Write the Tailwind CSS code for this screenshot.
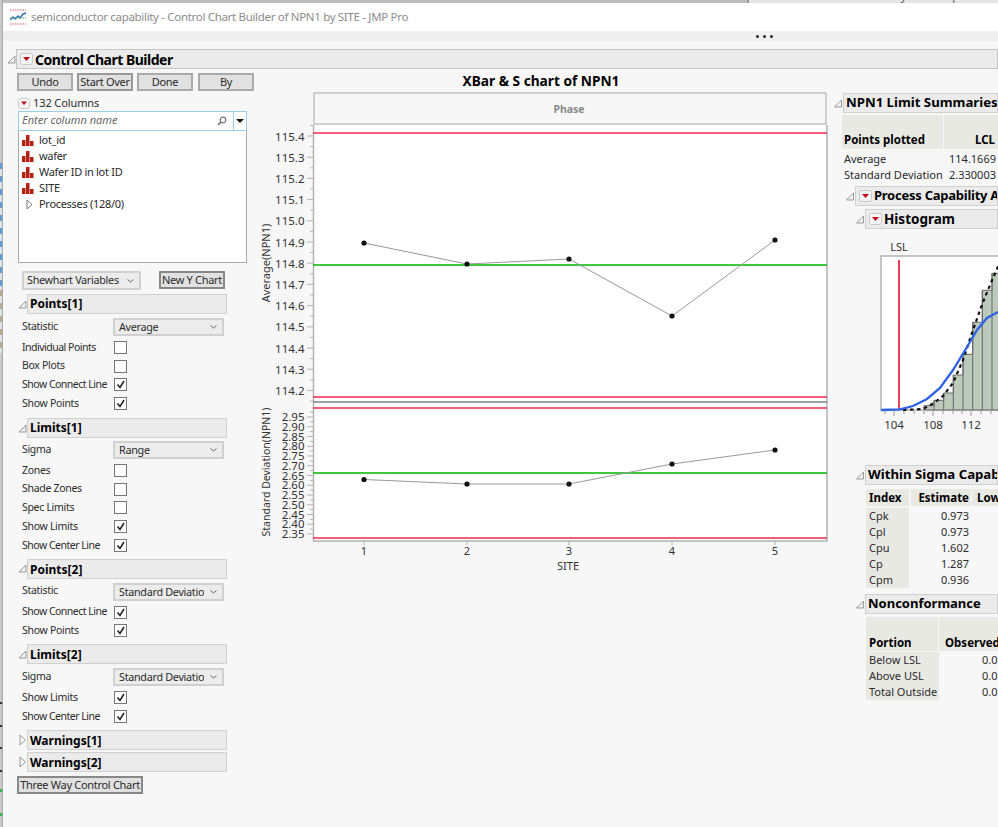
<!DOCTYPE html>
<html><head><meta charset="utf-8"><title>Control Chart Builder</title>
<script src="https://cdn.jsdelivr.net/npm/@tailwindcss/browser@4"></script></head>
<body class="bg-[#f7f7f7]">
<div class="w-[998px] h-[827px] overflow-hidden flex bg-[#f7f7f7] text-[#2b2b2b] text-[10.5px] tracking-[-0.3px] font-['Noto_Sans',sans-serif]">
  <!-- sliver of the window behind -->
  <div class="w-[3px] shrink-0 flex flex-col bg-[#c9c9c9] border-r border-[#aaa]">
    <div class="h-[163px]"></div>
    <div class="h-[127px] bg-[repeating-linear-gradient(#5b9bd8_0_6px,#dbe4ec_6px_13px)]"></div>
    <div class="h-[63px] bg-[repeating-linear-gradient(#b8a98c_0_6px,#dbe4ec_6px_13px)]"></div>
    <div class="h-[349px]"></div>
    <div class="h-[2px] bg-[#333]"></div><div class="h-[21px]"></div>
    <div class="h-[2px] bg-[#333]"></div><div class="h-[20px]"></div>
    <div class="h-[2px] bg-[#333]"></div><div class="h-[21px]"></div>
    <div class="h-[2px] bg-[#333]"></div><div class="h-[17px]"></div>
    <div class="h-[3px] bg-[#2fb84a]"></div><div class="h-[21px]"></div>
    <div class="h-[3px] bg-[#2fb84a]"></div>
  </div>
  <div class="flex-1 min-w-0 flex flex-col">
  <div class="h-[3px] shrink-0 flex bg-[#bdbdbd] overflow-hidden">
    <div class="w-[744px] shrink-0"></div>
    <div class="flex-1 bg-[#e4e4e4] border-l-2 border-[#999] relative h-[3px] overflow-hidden text-[11px] text-[#555] tracking-normal">
      <div class="flex -mt-[12px] pl-[8px] gap-[16px] whitespace-nowrap"><span>File</span><span>Tables</span><span>DOE</span><span>Analyze</span><span>Graph</span><span>Tools</span></div>
    </div>
  </div>
  <div class="h-[28px] shrink-0 flex items-center bg-white pl-[7px]">
    <svg width="17" height="16" viewBox="0 0 17 16" class="mr-[4px] shrink-0"><path d="M0 1h16" stroke="#e05a6a" stroke-dasharray="1.500 1"/><path d="M0 15h16" stroke="#e05a6a" stroke-dasharray="1.500 1"/><path d="M0 11l3-3 2 2 3-3 2 2 3-4 3-1" fill="none" stroke="#2a6fc0" stroke-width="1.500"/><path d="M0 9h16" stroke="#6aaa5a" stroke-dasharray="2 1"/></svg>
    <span class="text-[11.5px] tracking-[-0.32px] text-[#8c8c8c] whitespace-nowrap">semiconductor capability - Control Chart Builder of NPN1 by SITE - JMP Pro</span>
  </div>
  <div class="h-[10px] shrink-0 flex items-center justify-end pr-[225px] gap-[4px] bg-[#efefef]">
    <i class="w-[3px] h-[3px] rounded-full bg-[#222]"></i><i class="w-[3px] h-[3px] rounded-full bg-[#222]"></i><i class="w-[3px] h-[3px] rounded-full bg-[#222]"></i>
  </div>
  <div class="flex-1 pt-[8px] bg-[#f7f7f7] min-h-0">
    <!-- top outline -->
    <div class="flex items-center h-[20px] ml-[4px]">
      <svg width="9" height="9" viewBox="0 0 9 9" class="shrink-0"><path d="M8 1v7H1z" fill="#f2f2f2" stroke="#999"/></svg>
      <div class="flex-1 h-[20px] flex items-center bg-[#ebebeb] border border-[#c4c4c4] pl-[3px] text-[14px] tracking-[-0.5px] font-bold text-black">
        <svg width="13" height="12" viewBox="0 0 13 12" class="mr-[2px] shrink-0"><rect x=".5" y=".5" width="12" height="11" rx="2" fill="#f5f5f5" stroke="#c8c8c8"/><path d="M3 4h7l-3.500 4z" fill="#c8001e"/></svg>
        <span>Control Chart Builder</span>
      </div>
    </div>
    <div class="flex mt-[1px]">
      <!-- left column -->
      <div class="w-[238px] ml-[14px] shrink-0">
        <div class="flex gap-[4px] mt-[3px]">
          <button class="w-[56px] h-[18px] bg-[#e1e1e1] border-2 border-[#aaa] text-[11px] leading-[14px]">Undo</button>
          <button class="w-[56px] h-[18px] bg-[#e1e1e1] border-2 border-[#999] text-[11px] leading-[14px] whitespace-nowrap">Start Over</button>
          <button class="w-[56px] h-[18px] bg-[#e1e1e1] border-2 border-[#aaa] text-[11px] leading-[14px]">Done</button>
          <button class="w-[56px] h-[18px] bg-[#e1e1e1] border-2 border-[#aaa] ml-[1px] text-[11px] leading-[14px]">By</button>
        </div>
        <div class="flex items-center h-[14px] mt-[6px] ml-[1px] gap-[3px]">
          <svg width="12" height="11" viewBox="0 0 12 11" class="shrink-0 -mt-[2px]"><rect x=".5" y=".5" width="11" height="10" rx="2" fill="#f5f5f5" stroke="#c8c8c8"/><path d="M3 3.500h6l-3 3.500z" fill="#c8001e"/></svg>
          <span class="text-[11px] tracking-[-0.1px] -mt-[1px]">132 Columns</span>
        </div>
        <div class="ml-[1px] w-[229px] h-[20px] flex bg-white border border-[#99cfe8]">
          <div class="flex-1 flex items-center pl-[3px] -mt-[1px] italic text-[#666] text-[11px] tracking-normal">Enter column name</div>
          <svg width="10" height="10" viewBox="0 0 10 10" class="self-center mr-[6px] shrink-0"><circle cx="6" cy="4" r="2.800" fill="none" stroke="#777" stroke-width="1.200"/><path d="M4 6L1 9" stroke="#666" stroke-width="1.500"/></svg>
          <div class="w-[13px] flex items-center justify-center border-l border-[#99cfe8]"><svg width="8" height="4" viewBox="0 0 8 4"><path d="M0 0h8L4 4z" fill="#111"/></svg></div>
        </div>
        <div class="ml-[1px] w-[229px] h-[132px] bg-white border border-t-0 border-[#aaa] pl-[3px] pt-[1px] text-[11px]">
          <div class="h-[16px] flex items-center gap-[5px]"><svg width="12" height="11" viewBox="0 0 12 11" class="shrink-0"><path d="M0 5h3.500v6H0zM4 0h3.500v11H4zM8 6h3.500v5H8z" fill="#b5200f"/></svg>lot_id</div>
          <div class="h-[16px] flex items-center gap-[5px]"><svg width="12" height="11" viewBox="0 0 12 11" class="shrink-0"><path d="M0 5h3.500v6H0zM4 0h3.500v11H4zM8 6h3.500v5H8z" fill="#b5200f"/></svg>wafer</div>
          <div class="h-[16px] flex items-center gap-[5px]"><svg width="12" height="11" viewBox="0 0 12 11" class="shrink-0"><path d="M0 5h3.500v6H0zM4 0h3.500v11H4zM8 6h3.500v5H8z" fill="#b5200f"/></svg>Wafer ID in lot ID</div>
          <div class="h-[16px] flex items-center gap-[5px]"><svg width="12" height="11" viewBox="0 0 12 11" class="shrink-0"><path d="M0 5h3.500v6H0zM4 0h3.500v11H4zM8 6h3.500v5H8z" fill="#b5200f"/></svg>SITE</div>
          <div class="h-[16px] flex items-center gap-[6px] pl-[4px]"><svg width="7" height="11" viewBox="0 0 7 11" class="shrink-0"><path d="M1 1l5 4.500L1 10z" fill="none" stroke="#777"/></svg>Processes (128/0)</div>
        </div>
        <div class="flex items-start mt-[8px] ml-[5px] h-[19px]">
          <div class="w-[119px] h-[19px] bg-[#ececec] border-2 border-[#d0d0d0] flex items-center justify-between pl-[3px] pr-[5px] text-[10.8px] whitespace-nowrap"><span>Shewhart Variables</span><svg width="7" height="4" viewBox="0 0 7 4" class="shrink-0"><path d="M.5.500l3 2.500 3-2.500" fill="none" stroke="#666"/></svg></div>
          <button class="ml-[18px] w-[66px] h-[18px] bg-[#e1e1e1] border-2 border-[#888] text-[11px] leading-[14px] whitespace-nowrap">New Y Chart</button>
        </div>

        <div class="flex items-center h-[20px] mt-[4px] ml-[1px]"><svg width="9" height="9" viewBox="0 0 9 9" class="shrink-0"><path d="M8 1v7H1z" fill="#f2f2f2" stroke="#999"/></svg><div class="w-[200px] h-[20px] flex items-center pl-[2px] bg-[#ebebeb] border border-[#d0d0d0] text-[12px] tracking-normal font-bold text-black">Points[1]</div></div>
        <div class="flex items-center h-[22px] mt-[2px] ml-[5px]"><span class="w-[91px] -mt-[1px]">Statistic</span><div class="w-[111px] h-[18px] bg-[#ececec] border-2 border-[#d0d0d0] flex items-center justify-between pl-[4px] pr-[5px] text-[10.8px]"><span>Average</span><svg width="7" height="4" viewBox="0 0 7 4" class="shrink-0"><path d="M.5.500l3 2.500 3-2.500" fill="none" stroke="#666"/></svg></div></div>
        <div class="flex items-center h-[18.75px] ml-[5px]"><span class="w-[92px] whitespace-nowrap tracking-[-0.5px]">Individual Points</span><i class="w-[13px] h-[13px] bg-white border border-[#777]"></i></div>
        <div class="flex items-center h-[18.75px] ml-[5px]"><span class="w-[92px]">Box Plots</span><i class="w-[13px] h-[13px] bg-white border border-[#777]"></i></div>
        <div class="flex items-center h-[18.75px] ml-[5px]"><span class="w-[92px] whitespace-nowrap tracking-[-0.5px]">Show Connect Line</span><i class="w-[13px] h-[13px] bg-white border border-[#777] flex"><svg width="11" height="11" viewBox="0 0 11 11"><path d="M2.500 5.500l2.500 3 4-6.500" fill="none" stroke="#222" stroke-width="1.600"/></svg></i></div>
        <div class="flex items-center h-[18.75px] ml-[5px]"><span class="w-[92px]">Show Points</span><i class="w-[13px] h-[13px] bg-white border border-[#777] flex"><svg width="11" height="11" viewBox="0 0 11 11"><path d="M2.500 5.500l2.500 3 4-6.500" fill="none" stroke="#222" stroke-width="1.600"/></svg></i></div>

        <div class="flex items-center h-[20px] mt-[5px] ml-[1px]"><svg width="9" height="9" viewBox="0 0 9 9" class="shrink-0"><path d="M8 1v7H1z" fill="#f2f2f2" stroke="#999"/></svg><div class="w-[200px] h-[20px] flex items-center pl-[2px] bg-[#ebebeb] border border-[#d0d0d0] text-[12px] tracking-normal font-bold text-black">Limits[1]</div></div>
        <div class="flex items-center h-[22px] mt-[1px] ml-[5px]"><span class="w-[91px] -mt-[1px]">Sigma</span><div class="w-[111px] h-[18px] bg-[#ececec] border-2 border-[#d0d0d0] flex items-center justify-between pl-[4px] pr-[5px] text-[10.8px]"><span>Range</span><svg width="7" height="4" viewBox="0 0 7 4" class="shrink-0"><path d="M.5.500l3 2.500 3-2.500" fill="none" stroke="#666"/></svg></div></div>
        <div class="flex items-center h-[18.75px] ml-[5px]"><span class="w-[92px]">Zones</span><i class="w-[13px] h-[13px] bg-white border border-[#777]"></i></div>
        <div class="flex items-center h-[18.75px] ml-[5px]"><span class="w-[92px]">Shade Zones</span><i class="w-[13px] h-[13px] bg-white border border-[#777]"></i></div>
        <div class="flex items-center h-[18.75px] ml-[5px]"><span class="w-[92px]">Spec Limits</span><i class="w-[13px] h-[13px] bg-white border border-[#777]"></i></div>
        <div class="flex items-center h-[18.75px] ml-[5px]"><span class="w-[92px]">Show Limits</span><i class="w-[13px] h-[13px] bg-white border border-[#777] flex"><svg width="11" height="11" viewBox="0 0 11 11"><path d="M2.500 5.500l2.500 3 4-6.500" fill="none" stroke="#222" stroke-width="1.600"/></svg></i></div>
        <div class="flex items-center h-[18.75px] ml-[5px]"><span class="w-[92px] whitespace-nowrap tracking-[-0.5px]">Show Center Line</span><i class="w-[13px] h-[13px] bg-white border border-[#777] flex"><svg width="11" height="11" viewBox="0 0 11 11"><path d="M2.500 5.500l2.500 3 4-6.500" fill="none" stroke="#222" stroke-width="1.600"/></svg></i></div>

        <div class="flex items-center h-[20px] mt-[4px] ml-[1px]"><svg width="9" height="9" viewBox="0 0 9 9" class="shrink-0"><path d="M8 1v7H1z" fill="#f2f2f2" stroke="#999"/></svg><div class="w-[200px] h-[20px] flex items-center pl-[2px] pt-[2px] bg-[#ebebeb] border border-[#d0d0d0] text-[12px] tracking-normal font-bold text-black">Points[2]</div></div>
        <div class="flex items-center h-[22px] mt-[2px] ml-[5px]"><span class="w-[91px] -mt-[1px]">Statistic</span><div class="w-[111px] h-[18px] bg-[#ececec] border-2 border-[#d0d0d0] flex items-center justify-between pl-[4px] pr-[5px] text-[10.8px]"><span class="w-[85px] overflow-hidden whitespace-nowrap">Standard Deviation</span><svg width="7" height="4" viewBox="0 0 7 4" class="shrink-0"><path d="M.5.500l3 2.500 3-2.500" fill="none" stroke="#666"/></svg></div></div>
        <div class="flex items-center h-[18.75px] ml-[5px]"><span class="w-[92px] whitespace-nowrap tracking-[-0.5px]">Show Connect Line</span><i class="w-[13px] h-[13px] bg-white border border-[#777] flex"><svg width="11" height="11" viewBox="0 0 11 11"><path d="M2.500 5.500l2.500 3 4-6.500" fill="none" stroke="#222" stroke-width="1.600"/></svg></i></div>
        <div class="flex items-center h-[18.75px] ml-[5px]"><span class="w-[92px]">Show Points</span><i class="w-[13px] h-[13px] bg-white border border-[#777] flex"><svg width="11" height="11" viewBox="0 0 11 11"><path d="M2.500 5.500l2.500 3 4-6.500" fill="none" stroke="#222" stroke-width="1.600"/></svg></i></div>

        <div class="flex items-center h-[20px] mt-[4px] ml-[1px]"><svg width="9" height="9" viewBox="0 0 9 9" class="shrink-0"><path d="M8 1v7H1z" fill="#f2f2f2" stroke="#999"/></svg><div class="w-[200px] h-[20px] flex items-center pl-[2px] pt-[2px] bg-[#ebebeb] border border-[#d0d0d0] text-[12px] tracking-normal font-bold text-black">Limits[2]</div></div>
        <div class="flex items-center h-[22px] mt-[2px] ml-[5px]"><span class="w-[91px] -mt-[1px]">Sigma</span><div class="w-[111px] h-[18px] bg-[#ececec] border-2 border-[#d0d0d0] flex items-center justify-between pl-[4px] pr-[5px] text-[10.8px]"><span class="w-[85px] overflow-hidden whitespace-nowrap">Standard Deviation</span><svg width="7" height="4" viewBox="0 0 7 4" class="shrink-0"><path d="M.5.500l3 2.500 3-2.500" fill="none" stroke="#666"/></svg></div></div>
        <div class="flex items-center h-[18.75px] ml-[5px]"><span class="w-[92px]">Show Limits</span><i class="w-[13px] h-[13px] bg-white border border-[#777] flex"><svg width="11" height="11" viewBox="0 0 11 11"><path d="M2.500 5.500l2.500 3 4-6.500" fill="none" stroke="#222" stroke-width="1.600"/></svg></i></div>
        <div class="flex items-center h-[18.75px] ml-[5px]"><span class="w-[92px] whitespace-nowrap tracking-[-0.5px]">Show Center Line</span><i class="w-[13px] h-[13px] bg-white border border-[#777] flex"><svg width="11" height="11" viewBox="0 0 11 11"><path d="M2.500 5.500l2.500 3 4-6.500" fill="none" stroke="#222" stroke-width="1.600"/></svg></i></div>

        <div class="flex items-center h-[20px] mt-[4px] ml-[1px]"><svg width="9" height="12" viewBox="0 0 9 12" class="shrink-0"><path d="M2 1l5.500 5L2 11z" fill="none" stroke="#999"/></svg><div class="w-[200px] h-[20px] flex items-center pl-[2px] pt-[2px] bg-[#ebebeb] border border-[#d0d0d0] text-[12px] tracking-normal font-bold text-black">Warnings[1]</div></div>
        <div class="flex items-center h-[20px] mt-[2px] ml-[1px]"><svg width="9" height="12" viewBox="0 0 9 12" class="shrink-0"><path d="M2 1l5.500 5L2 11z" fill="none" stroke="#999"/></svg><div class="w-[200px] h-[20px] flex items-center pl-[2px] pt-[2px] bg-[#ebebeb] border border-[#d0d0d0] text-[12px] tracking-normal font-bold text-black">Warnings[2]</div></div>
        <button class="block mt-[4px] w-[126px] h-[18px] bg-[#e1e1e1] border-2 border-[#888] text-[11px] leading-[14px] whitespace-nowrap">Three Way Control Chart</button>
      </div>

      <!-- chart column -->
      <svg width="575" height="510" viewBox="255 70 575 510" class="shrink-0 tracking-normal font-['Noto_Sans',sans-serif]">
        <text x="541" y="86" text-anchor="middle" font-size="13.700" font-weight="700" fill="#000">XBar &amp; S chart of NPN1</text>
        <rect x="314" y="93" width="512" height="31" fill="#f7f7f7" stroke="#a8a8a8"/>
        <text x="569" y="113" text-anchor="middle" font-size="10.500" font-weight="700" fill="#888">Phase</text>
        <rect x="313.500" y="125" width="513" height="416" fill="#fff"/>
        <path d="M313.500 125V541H827V125" fill="none" stroke="#b4b4b4" stroke-width="1.500"/>
        <path d="M313 133H827" stroke="#ee2a48" stroke-width="1.600"/>
        <path d="M313 265H827" stroke="#00b400" stroke-width="1.600"/>
        <path d="M313 397H827" stroke="#ee2a48" stroke-width="1.600"/>
        <path d="M313 402H827" stroke="#808080" stroke-width="1.600"/>
        <path d="M313 408H827" stroke="#ee2a48" stroke-width="1.600"/>
        <path d="M313 473H827" stroke="#00b400" stroke-width="1.600"/>
        <path d="M313 538H827" stroke="#ee2a48" stroke-width="1.600"/>
        <path d="M364 243L467 264L569 259L672 316L775 240" fill="none" stroke="#999"/>
        <path d="M364 479.500L467 484L569 484L672 464L775 450" fill="none" stroke="#999"/>
        <g fill="#111"><circle cx="364" cy="243" r="2.600"/><circle cx="467" cy="264" r="2.600"/><circle cx="569" cy="259" r="2.600"/><circle cx="672" cy="316" r="2.600"/><circle cx="775" cy="240" r="2.600"/><circle cx="364" cy="479.500" r="2.600"/><circle cx="467" cy="484" r="2.600"/><circle cx="569" cy="484" r="2.600"/><circle cx="672" cy="464" r="2.600"/><circle cx="775" cy="450" r="2.600"/></g>
        <path d="M307 136h6M307 157.200h6M307 178.400h6M307 199.600h6M307 220.800h6M307 242h6M307 263.200h6M307 284.400h6M307 305.600h6M307 326.800h6M307 348h6M307 369.200h6M307 390.400h6M310 125.400h3M310 146.600h3M310 167.800h3M310 189h3M310 210.200h3M310 231.400h3M310 252.600h3M310 273.800h3M310 295h3M310 316.200h3M310 337.400h3M310 358.600h3M310 379.800h3M310 401h3M307 417h6M307 426.750h6M307 436.500h6M307 446.250h6M307 456h6M307 465.750h6M307 475.500h6M307 485.250h6M307 495h6M307 504.750h6M307 514.500h6M307 524.250h6M307 534h6M310 412h3M310 421.900h3M310 431.600h3M310 441.400h3M310 451.100h3M310 460.900h3M310 470.600h3M310 480.400h3M310 490.100h3M310 499.900h3M310 509.600h3M310 519.400h3M310 529.100h3" stroke="#b4b4b4"/>
        <path d="M364 541v4M467 541v4M569 541v4M672 541v4M775 541v4" stroke="#b4b4b4"/>
        <g font-size="11.500" text-anchor="end" fill="#333">
          <text x="304.500" y="140.500">115.4</text><text x="304.500" y="161.700">115.3</text><text x="304.500" y="182.900">115.2</text><text x="304.500" y="204">115.1</text><text x="304.500" y="225.300">115.0</text><text x="304.500" y="246.500">114.9</text><text x="304.500" y="267.700">114.8</text><text x="304.500" y="288.900">114.7</text><text x="304.500" y="310">114.6</text><text x="304.500" y="331.300">114.5</text><text x="304.500" y="352.500">114.4</text><text x="304.500" y="373.700">114.3</text><text x="304.500" y="394.900">114.2</text>
          <text x="304.500" y="421">2.95</text><text x="304.500" y="431">2.90</text><text x="304.500" y="440.500">2.85</text><text x="304.500" y="450.300">2.80</text><text x="304.500" y="460">2.75</text><text x="304.500" y="469.800">2.70</text><text x="304.500" y="479.500">2.65</text><text x="304.500" y="489.300">2.60</text><text x="304.500" y="499">2.55</text><text x="304.500" y="508.800">2.50</text><text x="304.500" y="518.500">2.45</text><text x="304.500" y="528.300">2.40</text><text x="304.500" y="538">2.35</text>
        </g>
        <g font-size="11" text-anchor="middle" fill="#333">
          <text x="364" y="555">1</text><text x="467" y="555">2</text><text x="569" y="555">3</text><text x="672" y="555">4</text><text x="775" y="555">5</text>
          <text x="568" y="570">SITE</text>
          <text transform="translate(270 263) rotate(-90)">Average(NPN1)</text>
          <text transform="translate(270 472) rotate(-90)" font-size="10.500">Standard Deviation(NPN1)</text>
        </g>
      </svg>

      <!-- right column -->
      <div class="flex-1 min-w-0 overflow-hidden tracking-normal text-[11px]">
        <div class="flex items-center h-[20px] mt-[23px] ml-[3px]"><svg width="10" height="9" viewBox="0 0 9 9" class="shrink-0"><path d="M8 1v7H1z" fill="#f2f2f2" stroke="#999"/></svg><div class="flex-1 min-w-0 h-[20px] flex items-center pl-[2px] bg-[#ebebeb] border border-[#d0d0d0] text-[13.2px] font-bold text-black whitespace-nowrap overflow-hidden">NPN1 Limit Summaries</div></div>
        <div class="flex ml-[12px] mt-[2px] h-[34px]">
          <div class="w-[101px] bg-[#e9e9e4] flex items-end pl-[2px] pb-[1px] text-[11.5px] font-bold text-black">Points plotted</div>
          <div class="flex-1 ml-[1px] bg-[#e9e9e4] flex items-end justify-end pr-[3px] pb-[1px] text-[11.5px] font-bold text-black">LCL</div>
        </div>
        <div class="ml-[14px] mt-[2px]">
          <div class="flex h-[16px] items-center"><span class="w-[105px]">Average</span><span>114.1669</span></div>
          <div class="flex h-[16px] items-center whitespace-nowrap"><span class="w-[105px]">Standard Deviation</span><span>2.330003</span></div>
        </div>
        <div class="flex items-center h-[20px] mt-[3px] ml-[15px]"><svg width="10" height="9" viewBox="0 0 9 9" class="shrink-0"><path d="M8 1v7H1z" fill="#f2f2f2" stroke="#999"/></svg><div class="flex-1 min-w-0 h-[20px] flex items-center pl-[3px] bg-[#ebebeb] border border-[#d0d0d0] text-[13px] tracking-[-0.25px] font-bold text-black whitespace-nowrap overflow-hidden"><svg width="13" height="12" viewBox="0 0 13 12" class="mr-[2px] shrink-0"><rect x=".5" y=".5" width="12" height="11" rx="2" fill="#f5f5f5" stroke="#c8c8c8"/><path d="M3 4h7l-3.500 4z" fill="#c8001e"/></svg>Process Capability Analysis</div></div>
        <div class="flex items-center h-[20px] mt-[3px] ml-[25px]"><svg width="10" height="9" viewBox="0 0 9 9" class="shrink-0"><path d="M8 1v7H1z" fill="#f2f2f2" stroke="#999"/></svg><div class="flex-1 min-w-0 h-[20px] flex items-center pl-[3px] bg-[#ebebeb] border border-[#d0d0d0] text-[13.5px] font-bold text-black whitespace-nowrap"><svg width="13" height="12" viewBox="0 0 13 12" class="mr-[2px] shrink-0"><rect x=".5" y=".5" width="12" height="11" rx="2" fill="#f5f5f5" stroke="#c8c8c8"/><path d="M3 4h7l-3.500 4z" fill="#c8001e"/></svg>Histogram</div></div>
        <svg width="168" height="205" viewBox="830 229 168 205" class="block font-['Noto_Sans',sans-serif]">
          <text x="899" y="251" text-anchor="middle" font-size="11" fill="#333">LSL</text>
          <rect x="881" y="256" width="130" height="154" fill="#fff" stroke="#b4b4b4" stroke-width="1.500"/>
          <path d="M924 410V405.700H934V400.300H943.700V393H953.300V375H963V354.300H972.700V322.300H982.300V290.300H992V273.300H1002V410Z" fill="#bbcaba" stroke="#666"/>
          <path d="M934 410V400.300M943.700 410V393M953.300 410V375M963 410V354.300M972.700 410V322.300M982.300 410V290.300M992 410V273.300" stroke="#666"/>
          <path d="M899 260V410" stroke="#ee2a48" stroke-width="1.800"/>
          <path d="M903 410L923 409L934 403L943 396L953 383L963 360L973 330L983 302L993 278L1000 262" fill="none" stroke="#111" stroke-width="2.200" stroke-dasharray="3.500 3.500"/>
          <path d="M881 410L900 409.300L913 406L927 399L940 388L953 370L967 347L977 330L987 318L998 312" fill="none" stroke="#2d62e8" stroke-width="2.300"/>
          <path d="M885 411v3M894 411v5M904 411v3M914 411v3M924 411v3M933 411v5M943 411v3M953 411v3M962 411v3M971 411v5M981 411v3M991 411v3" stroke="#999"/>
          <g font-size="11.500" text-anchor="middle" fill="#333"><text x="894" y="429">104</text><text x="933" y="429">108</text><text x="971" y="429">112</text></g>
        </svg>
        <div class="flex items-center h-[20px] mt-[31px] ml-[25px]"><svg width="10" height="9" viewBox="0 0 9 9" class="shrink-0"><path d="M8 1v7H1z" fill="#f2f2f2" stroke="#999"/></svg><div class="flex-1 min-w-0 h-[20px] flex items-center pl-[2px] bg-[#ebebeb] border border-[#d0d0d0] text-[13.2px] font-bold text-black whitespace-nowrap overflow-hidden">Within Sigma Capability</div></div>
        <div class="flex ml-[36px] mt-[4px] h-[17px] items-end text-[11.5px] font-bold text-black whitespace-nowrap">
          <div class="w-[43px] h-[17px] bg-[#e9e9e4] pl-[3px] leading-[18px]">Index</div>
          <div class="w-[60px] h-[17px] ml-[2px] bg-[#e9e9e4] text-right pr-[2px] leading-[18px]">Estimate</div>
          <div class="flex-1 h-[17px] ml-[1px] bg-[#e9e9e4] pl-[5px] overflow-hidden leading-[18px]">Lower</div>
        </div>
        <div class="ml-[36px] mt-[2px]">
          <div class="flex h-[16px] items-center"><span class="w-[43px] h-[16px] bg-[#e9e9e4] pl-[3px]">Cpk</span><span class="w-[60px] text-right pr-[2px] ml-[2px]">0.973</span></div>
          <div class="flex h-[16px] items-center"><span class="w-[43px] h-[16px] bg-[#e9e9e4] pl-[3px]">Cpl</span><span class="w-[60px] text-right pr-[2px] ml-[2px]">0.973</span></div>
          <div class="flex h-[16px] items-center"><span class="w-[43px] h-[16px] bg-[#e9e9e4] pl-[3px]">Cpu</span><span class="w-[60px] text-right pr-[2px] ml-[2px]">1.602</span></div>
          <div class="flex h-[16px] items-center"><span class="w-[43px] h-[16px] bg-[#e9e9e4] pl-[3px]">Cp</span><span class="w-[60px] text-right pr-[2px] ml-[2px]">1.287</span></div>
          <div class="flex h-[16px] items-center"><span class="w-[43px] h-[16px] bg-[#e9e9e4] pl-[3px]">Cpm</span><span class="w-[60px] text-right pr-[2px] ml-[2px]">0.936</span></div>
        </div>
        <div class="flex items-center h-[20px] mt-[6px] ml-[25px]"><svg width="10" height="9" viewBox="0 0 9 9" class="shrink-0"><path d="M8 1v7H1z" fill="#f2f2f2" stroke="#999"/></svg><div class="flex-1 min-w-0 h-[20px] flex items-center pl-[2px] bg-[#ebebeb] border border-[#d0d0d0] text-[13px] font-bold text-black whitespace-nowrap">Nonconformance</div></div>
        <div class="flex ml-[36px] mt-[3px] h-[34px] text-[11.5px] font-bold text-black whitespace-nowrap">
          <div class="w-[72px] bg-[#e9e9e4] flex items-end pl-[3px]">Portion</div>
          <div class="flex-1 ml-[1px] bg-[#e9e9e4] flex items-end pl-[6px] overflow-hidden">Observed</div>
        </div>
        <div class="ml-[36px] mt-[1px]">
          <div class="flex h-[16px] items-center"><span class="w-[73px] h-[16px] bg-[#e9e9e4] pl-[3px]">Below LSL</span><span class="ml-[10px] pl-[33px]">0.0</span></div>
          <div class="flex h-[16px] items-center"><span class="w-[73px] h-[16px] bg-[#e9e9e4] pl-[3px]">Above USL</span><span class="ml-[10px] pl-[33px]">0.0</span></div>
          <div class="flex h-[16px] items-center"><span class="w-[73px] h-[16px] bg-[#e9e9e4] pl-[3px] whitespace-nowrap">Total Outside</span><span class="ml-[10px] pl-[33px]">0.0</span></div>
        </div>
      </div>
    </div>
  </div>
  </div>
</div>
</body></html>
